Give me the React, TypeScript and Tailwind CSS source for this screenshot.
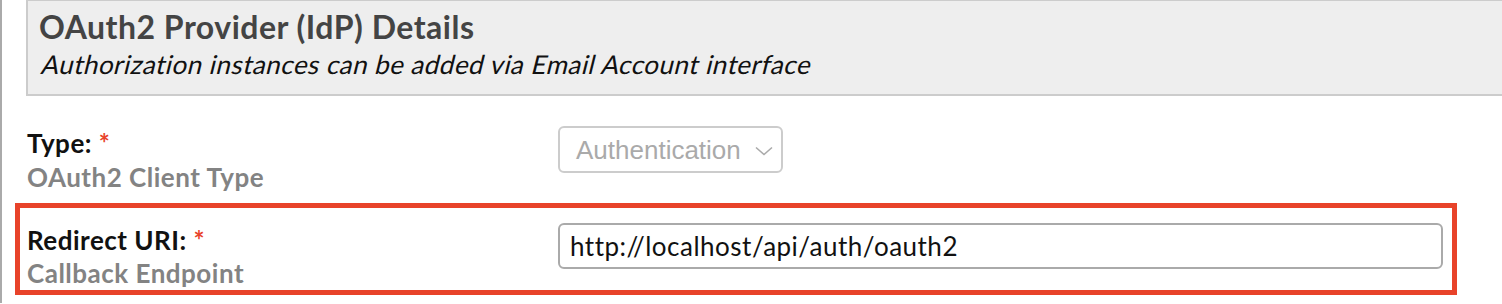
import React from "react";

export default function App() {
  const lato = { fontFamily: "Lato, 'Noto Sans', sans-serif" };
  return (
    <div className="w-[1502px] h-[304px] overflow-hidden bg-white" style={lato}>
      <div className="h-full border-l-2 border-[#aaaaaa] pl-[24px]">
        {/* Header */}
        <div className="-mt-px -mr-[20px] border-2 border-r-0 border-[#cccccc] bg-[#eeeeee] pl-[11px] pt-[7px] pb-[16px]">
          <div className="font-['Lato',sans-serif] text-[32px] leading-[38px] tracking-[0.5px] font-bold text-[#444444]">
            OAuth2 Provider (IdP) Details
          </div>
          <div className="mt-[4px] h-[28px]">
            <span className="inline-block origin-bottom -skew-x-[14deg] font-['Lato',sans-serif] text-[26px] leading-[28px] tracking-[0.45px] font-normal text-[#111111]">
              Authorization instances can be added via Email Account interface
            </span>
          </div>
        </div>

        {/* Type row */}
        <div className="mt-[30px] flex pl-px">
          <div className="w-[531px] font-['Lato',sans-serif] text-[26px] leading-[34px] tracking-[0.5px]">
            <div className="font-bold text-[#111111]">
              Type: <span className="text-[#e8432a]">*</span>
            </div>
            <div className="font-bold text-[#838383]">OAuth2 Client Type</div>
          </div>
          <div className="flex h-[47px] w-[225px] items-center justify-between rounded-[6px] border-2 border-[#cccccc] bg-white pl-[16px] pr-[8px]">
            <span className="font-['Liberation_Sans',Arial,sans-serif] text-[26px] leading-none text-[#aaaaaa]">
              Authentication
            </span>
            <svg width="18" height="10" viewBox="0 0 18 10" fill="none" className="mt-[2px]">
              <path d="M1 1.5 L9 8.5 L17 1.5" stroke="#aaaaaa" strokeWidth="1.6" />
            </svg>
          </div>
        </div>

        {/* Redirect URI row */}
        <div className="-ml-[11px] mt-[9px] w-[1442px] border-[5px] border-[#e8432a] pl-[7px] pt-[15px] pr-[9px]">
          <div className="flex">
            <div className="w-[531px] pt-px font-['Lato',sans-serif] text-[26px] leading-[33px] tracking-[0.5px]">
              <div className="font-bold text-[#111111]">
                Redirect URI: <span className="text-[#e8432a]">*</span>
              </div>
              <div className="font-bold text-[#838383]">Callback Endpoint</div>
            </div>
            <div className="flex h-[46px] flex-1 items-center rounded-[6px] border-2 border-[#aaaaaa] bg-white pl-[10px]">
              <span className="font-['Lato',sans-serif] text-[26px] leading-none tracking-[0.5px] text-[#111111]">
                http://localhost/api/auth/oauth2
              </span>
            </div>
          </div>
        </div>
      </div>
    </div>
  );
}
